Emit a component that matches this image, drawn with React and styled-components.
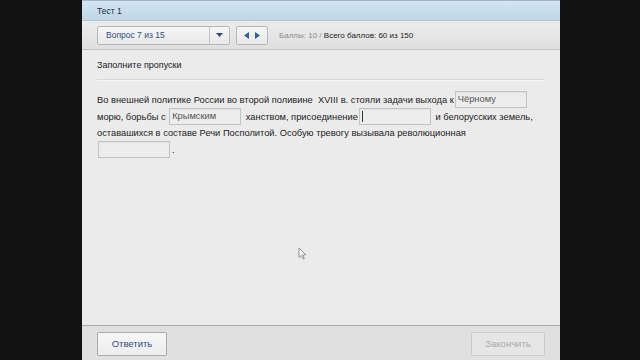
import React from "react";
import styled, { createGlobalStyle } from "styled-components";

const Global = createGlobalStyle`
  html, body { margin: 0; padding: 0; background: #121212; }
  * { box-sizing: border-box; }
  body { font-family: "Liberation Sans", Arial, sans-serif; }
`;

const Screen = styled.div`
  width: 640px;
  height: 360px;
  background: #121212;
  display: flex;
  padding-left: 82px;
  position: relative;
  overflow: hidden;
`;

const Window = styled.div`
  width: 478px;
  height: 360px;
  display: flex;
  flex-direction: column;
  background: #ebebeb;
`;

const TitleBar = styled.div`
  height: 21px;
  flex: none;
  background: linear-gradient(#d3e5f2, #c0d6e6);
  border-top: 1px solid #9fb6c6;
  border-bottom: 1px solid #b4c4cf;
  display: flex;
  align-items: center;
  padding-left: 15px;
  font-size: 8.5px;
  color: #1f2d3a;
`;

const Toolbar = styled.div`
  height: 29px;
  flex: none;
  background: linear-gradient(#ececec, #e0e0e0);
  border-bottom: 1px solid #c2c2c2;
  box-shadow: 0 1px 1px rgba(0,0,0,0.06);
  display: flex;
  align-items: center;
  padding-left: 15px;
`;

const Select = styled.div`
  width: 133px;
  height: 19px;
  display: flex;
  border: 1px solid #b8b8b8;
  border-radius: 2px;
  background: linear-gradient(#f6f6f6, #e9e9e9);
`;

const SelectLabel = styled.div`
  flex: 1;
  font-size: 8.5px;
  color: #2d4f7e;
  padding-left: 8px;
  display: flex;
  align-items: center;
`;

const SelectArrow = styled.div`
  width: 20px;
  border-left: 1px solid #c4c4c4;
  display: flex;
  align-items: center;
  justify-content: center;
`;

const NavGroup = styled.div`
  margin-left: 6px;
  width: 32px;
  height: 19px;
  border: 1px solid #b8b8b8;
  border-radius: 2px;
  background: linear-gradient(#f6f6f6, #e9e9e9);
  display: flex;
  align-items: center;
  justify-content: center;
  gap: 6px;
`;

const Score = styled.div`
  margin-left: 11px;
  font-size: 8px;
  color: #222;
  white-space: nowrap;
`;

const Muted = styled.span`
  color: #8a8a8a;
`;

const Content = styled.div`
  flex: 1;
  padding: 0 15px;
  background: #ebebeb;
`;

const Heading = styled.div`
  font-size: 9px;
  color: #222;
  height: 30px;
  display: flex;
  align-items: center;
  padding-top: 1px;
  border-bottom: 1px solid #d9d9d9;
  box-shadow: 0 1px 0 #f6f6f6;
`;

const Paragraph = styled.div`
  margin-top: 12px;
  font-size: 9.3px;
  line-height: 16.5px;
  color: #222;
  width: 440px;
`;

const Blank = styled.span`
  display: inline-block;
  vertical-align: middle;
  width: 72px;
  height: 17px;
  margin: -1px 2px -1px 1px;
  border: 1px solid #c3c3c3;
  background: #ededed;
  box-shadow: inset 0 1px 1px rgba(0,0,0,0.05);
  font-size: 9.3px;
  line-height: 15px;
  color: #555;
  padding-left: 2px;
  text-align: left;
  position: relative;
  top: -1px;
`;

const Caret = styled.span`
  display: inline-block;
  width: 1px;
  height: 11px;
  background: #333;
  vertical-align: middle;
`;

const Footer = styled.div`
  height: 35px;
  flex: none;
  background: #e0e0e0;
  border-top: 1px solid #a9a9a9;
  display: flex;
  align-items: center;
  justify-content: space-between;
  padding: 0 15px;
`;

const Button = styled.button`
  height: 24px;
  width: ${(p) => p.$w}px;
  border: 1px solid ${(p) => (p.disabled ? "#cacaca" : "#ababab")};
  border-radius: 2px;
  background: ${(p) => (p.disabled ? "#e6e6e6" : "linear-gradient(#f7f7f7, #ececec)")};
  color: ${(p) => (p.disabled ? "#a9a9a9" : "#2d4f7e")};
  font-family: "Liberation Sans", Arial, sans-serif;
  font-size: 9.5px;
  padding: 0;
  margin-top: 1px;
`;

const Cursor = styled.svg`
  position: absolute;
  left: 298px;
  top: 247px;
`;

export default function App() {
  return (
    <>
      <Global />
      <Screen>
        <Window>
          <TitleBar>Тест 1</TitleBar>
          <Toolbar>
            <Select>
              <SelectLabel>Вопрос 7 из 15</SelectLabel>
              <SelectArrow>
                <svg width="7" height="4" viewBox="0 0 7 4">
                  <path d="M0 0 H7 L3.5 4 Z" fill="#2d4f7e" />
                </svg>
              </SelectArrow>
            </Select>
            <NavGroup>
              <svg width="5" height="7" viewBox="0 0 5 7">
                <path d="M5 0 V7 L0 3.5 Z" fill="#2d5f9a" />
              </svg>
              <svg width="5" height="7" viewBox="0 0 5 7">
                <path d="M0 0 V7 L5 3.5 Z" fill="#2d5f9a" />
              </svg>
            </NavGroup>
            <Score>
              <Muted>Баллы: 10 / </Muted>Всего баллов: 60 из 150
            </Score>
          </Toolbar>
          <Content>
            <Heading>Заполните пропуски</Heading>
            <Paragraph>
              Во внешней политике России во второй поливине&nbsp; XVIII в. стояли задачи выхода к
              <Blank>Чёрному</Blank> морю, борьбы с <Blank>Крымским</Blank> ханством, присоединение
              <Blank><Caret /></Blank> и белорусских земель, оставашихся в составе Речи Посполитой.
              Особую тревогу вызывала революционная <Blank />.
            </Paragraph>
          </Content>
          <Footer>
            <Button $w={70}>Ответить</Button>
            <Button $w={74} disabled>Закончить</Button>
          </Footer>
        </Window>
        <Cursor width="9" height="13" viewBox="0 0 9 13">
          <path d="M1 1 V10.5 L3.3 8.4 L5 12 L6.3 11.4 L4.7 7.9 L7.8 7.8 Z" fill="#fff" stroke="#777" strokeWidth="0.8" />
        </Cursor>
      </Screen>
    </>
  );
}
